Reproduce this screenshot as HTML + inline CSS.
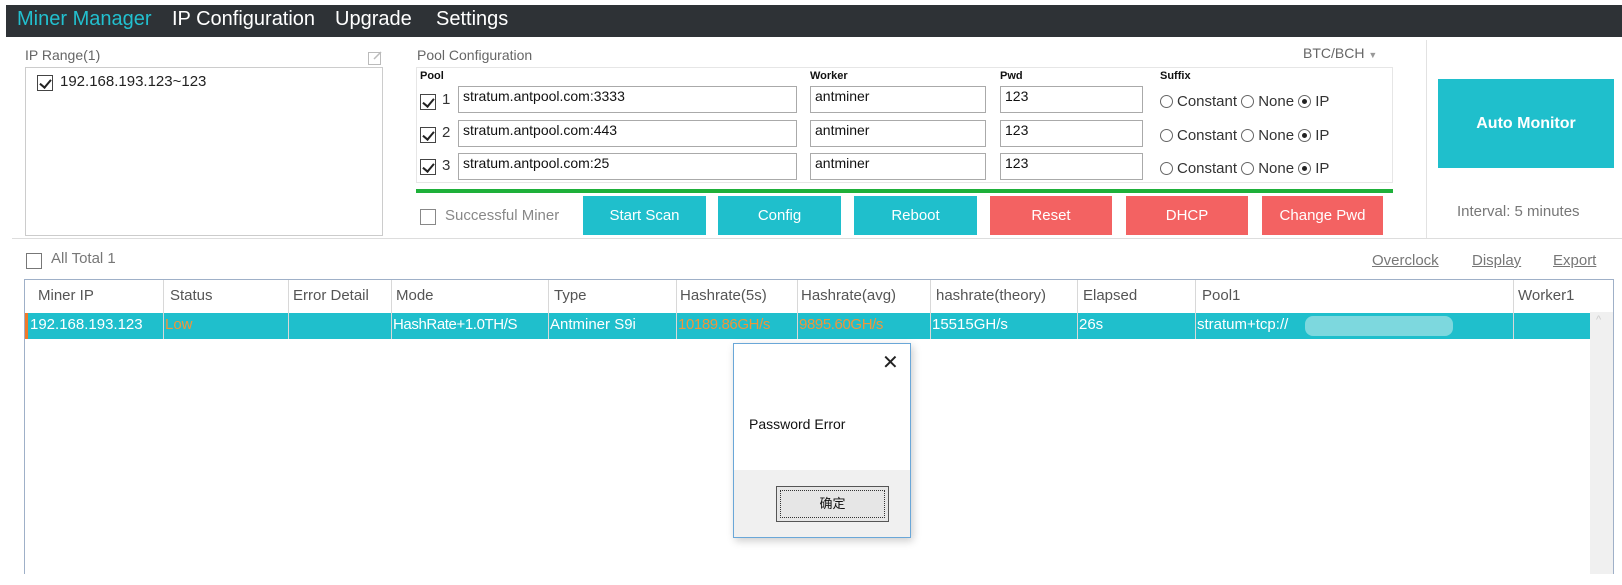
<!DOCTYPE html>
<html><head><meta charset="utf-8"><style>
*{box-sizing:border-box;margin:0;padding:0}
body{width:1622px;height:585px;background:#fff;position:relative;overflow:hidden;font-family:"Liberation Sans","Noto Sans CJK SC",sans-serif;color:#333}
.a{position:absolute;white-space:nowrap}
.top{left:6px;top:5px;width:1616px;height:32px;background:#2e3236}
.menu{font-size:20px;color:#fff;top:8px}
.lbl{font-size:14px;color:#666}
.cb{position:absolute;width:16px;height:16px;border:1px solid #444;background:#fff}
.cb.on::after{content:"";position:absolute;left:4px;top:1px;width:5px;height:9px;border:solid #222;border-width:0 2px 2px 0;transform:rotate(40deg)}
.inp{position:absolute;border:1px solid #aaa;background:#fff;font-size:14px;padding:1px 4px;color:#111;height:27px}
.btn{position:absolute;top:196px;height:39px;color:#fff;font-size:15px;text-align:center;line-height:39px}
.t{background:#1fbfcc}.r{background:#f36262}
.rad{display:inline-block;width:13px;height:13px;border:1px solid #666;border-radius:50%;vertical-align:-2px;margin-right:4px;position:relative}
.rad.on::after{content:"";position:absolute;left:3px;top:3px;width:5px;height:5px;border-radius:50%;background:#222}
.hd{font-size:15px;color:#555;top:287px}
.dt{font-size:15px;color:#fff;top:316px}
.sep{position:absolute;top:280px;width:1px;height:59px;background:#d8d8d8}
.or{color:#f0963a}
</style></head><body>
<div class="a top"></div>
<div class="a menu" style="left:17px;color:#22c0cf">Miner Manager</div>
<div class="a menu" style="left:172px">IP Configuration</div>
<div class="a menu" style="left:335px">Upgrade</div>
<div class="a menu" style="left:436px">Settings</div>

<div class="a lbl" style="left:25px;top:47px">IP Range(1)</div>
<svg class="a" style="left:368px;top:50px" width="15" height="15"><rect x="0.5" y="2.5" width="12" height="12" fill="none" stroke="#bbb"/><path d="M6 9 L13 2" stroke="#bbb" stroke-width="1.5"/></svg>
<div class="a" style="left:25px;top:67px;width:358px;height:169px;border:1px solid #ccc"></div>
<div class="cb on" style="left:37px;top:75px"></div>
<div class="a" style="left:60px;top:73px;font-size:15px;color:#222">192.168.193.123~123</div>

<div class="a lbl" style="left:417px;top:47px">Pool Configuration</div>
<div class="a lbl" style="left:1303px;top:45px">BTC/BCH <span style="font-size:9px;color:#999">▼</span></div>
<div class="a" style="left:416px;top:67px;width:977px;height:116px;border:1px solid #e6e6e6"></div>
<div class="a" style="left:420px;top:70px;font-size:11px;font-weight:bold;color:#111">Pool</div>
<div class="a" style="left:810px;top:70px;font-size:11px;font-weight:bold;color:#111">Worker</div>
<div class="a" style="left:1000px;top:70px;font-size:11px;font-weight:bold;color:#111">Pwd</div>
<div class="a" style="left:1160px;top:70px;font-size:11px;font-weight:bold;color:#111">Suffix</div>

<div class="cb on" style="left:420px;top:94px"></div><div class="a" style="left:442px;top:91px;font-size:15px">1</div>
<div class="inp" style="left:458px;top:86px;width:339px">stratum.antpool.com:3333</div>
<div class="inp" style="left:810px;top:86px;width:176px">antminer</div>
<div class="inp" style="left:1000px;top:86px;width:143px">123</div>
<div class="a" style="left:1160px;top:93px;font-size:15px"><span class="rad"></span>Constant <span class="rad"></span>None <span class="rad on"></span>IP</div>

<div class="cb on" style="left:420px;top:127px"></div><div class="a" style="left:442px;top:124px;font-size:15px">2</div>
<div class="inp" style="left:458px;top:120px;width:339px">stratum.antpool.com:443</div>
<div class="inp" style="left:810px;top:120px;width:176px">antminer</div>
<div class="inp" style="left:1000px;top:120px;width:143px">123</div>
<div class="a" style="left:1160px;top:127px;font-size:15px"><span class="rad"></span>Constant <span class="rad"></span>None <span class="rad on"></span>IP</div>

<div class="cb on" style="left:420px;top:159px"></div><div class="a" style="left:442px;top:157px;font-size:15px">3</div>
<div class="inp" style="left:458px;top:153px;width:339px">stratum.antpool.com:25</div>
<div class="inp" style="left:810px;top:153px;width:176px">antminer</div>
<div class="inp" style="left:1000px;top:153px;width:143px">123</div>
<div class="a" style="left:1160px;top:160px;font-size:15px"><span class="rad"></span>Constant <span class="rad"></span>None <span class="rad on"></span>IP</div>

<div class="a" style="left:416px;top:189px;width:977px;height:4px;background:#1eb03a"></div>
<div class="cb" style="left:420px;top:209px;border-color:#888"></div>
<div class="a" style="left:445px;top:207px;font-size:15px;color:#888">Successful Miner</div>
<div class="btn t" style="left:583px;width:123px">Start Scan</div>
<div class="btn t" style="left:718px;width:123px">Config</div>
<div class="btn t" style="left:854px;width:123px">Reboot</div>
<div class="btn r" style="left:990px;width:122px">Reset</div>
<div class="btn r" style="left:1126px;width:122px">DHCP</div>
<div class="btn r" style="left:1262px;width:121px">Change Pwd</div>

<div class="a" style="left:1426px;top:40px;width:1px;height:199px;background:#e2e2e2"></div>
<div class="a t" style="left:1438px;top:79px;width:176px;height:89px;color:#fff;font-size:16px;font-weight:bold;text-align:center;line-height:89px">Auto Monitor</div>
<div class="a" style="left:1457px;top:203px;font-size:15px;color:#777">Interval: 5 minutes</div>
<div class="a" style="left:12px;top:238px;width:1610px;height:1px;background:#ddd"></div>

<div class="cb" style="left:26px;top:253px;border-color:#777"></div>
<div class="a" style="left:51px;top:250px;font-size:15px;color:#777">All Total 1</div>
<div class="a" style="left:1372px;top:252px;font-size:15px;color:#777;text-decoration:underline">Overclock</div>
<div class="a" style="left:1472px;top:252px;font-size:15px;color:#777;text-decoration:underline">Display</div>
<div class="a" style="left:1553px;top:252px;font-size:15px;color:#777;text-decoration:underline">Export</div>

<div class="a" style="left:24px;top:279px;width:1590px;height:295px;border:1px solid #9fb0c8;border-bottom:none"></div>
<div class="a" style="left:1590px;top:312px;width:23px;height:262px;background:#f0f0f0"></div>
<div class="a" style="left:1596px;top:314px;font-size:11px;color:#ccc">^</div>
<div class="a t" style="left:25px;top:313px;width:1565px;height:26px"></div>
<div class="a" style="left:25px;top:313px;width:3px;height:26px;background:#f07a2a"></div>
<div class="sep" style="left:163px"></div><div class="sep" style="left:288px"></div><div class="sep" style="left:391px"></div><div class="sep" style="left:548px"></div><div class="sep" style="left:676px"></div><div class="sep" style="left:797px"></div><div class="sep" style="left:930px"></div><div class="sep" style="left:1077px"></div><div class="sep" style="left:1195px"></div><div class="sep" style="left:1513px"></div>
<div class="a hd" style="left:38px">Miner IP</div>
<div class="a hd" style="left:170px">Status</div>
<div class="a hd" style="left:293px">Error Detail</div>
<div class="a hd" style="left:396px">Mode</div>
<div class="a hd" style="left:554px">Type</div>
<div class="a hd" style="left:680px">Hashrate(5s)</div>
<div class="a hd" style="left:801px">Hashrate(avg)</div>
<div class="a hd" style="left:936px">hashrate(theory)</div>
<div class="a hd" style="left:1083px">Elapsed</div>
<div class="a hd" style="left:1202px">Pool1</div>
<div class="a hd" style="left:1518px">Worker1</div>
<div class="a dt" style="left:30px">192.168.193.123</div>
<div class="a dt or" style="left:165px">Low</div>
<div class="a dt" style="left:393px;letter-spacing:-0.4px">HashRate+1.0TH/S</div>
<div class="a dt" style="left:550px">Antminer S9i</div>
<div class="a dt or" style="left:678px;letter-spacing:-0.4px">10189.86GH/s</div>
<div class="a dt or" style="left:799px;letter-spacing:-0.4px">9895.60GH/s</div>
<div class="a dt" style="left:932px">15515GH/s</div>
<div class="a dt" style="left:1079px">26s</div>
<div class="a dt" style="left:1197px">stratum+tcp://</div>
<div class="a" style="left:1305px;top:316px;width:148px;height:20px;background:#7dd8de;border-radius:8px"></div>

<div class="a" style="left:733px;top:343px;width:178px;height:195px;background:#fff;border:1px solid #6aa7d8;box-shadow:2px 3px 8px rgba(0,0,0,.2)"></div>
<div class="a" style="left:734px;top:470px;width:176px;height:67px;background:#f0f0f0"></div>
<div class="a" style="left:882px;top:350px;font-size:20px;color:#222">✕</div>
<div class="a" style="left:749px;top:416px;font-size:14px;color:#111">Password Error</div>
<div class="a" style="left:776px;top:486px;width:113px;height:36px;border:1px solid #555;background:#e6e6e6;outline:1px dotted #333;outline-offset:-5px;text-align:center;line-height:34px;font-size:13px;color:#111">确定</div>
</body></html>
